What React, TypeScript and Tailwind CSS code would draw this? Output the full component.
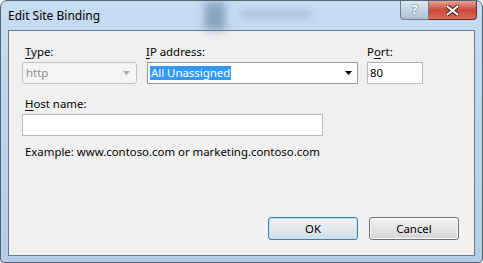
import React from "react";

const FONT = { fontFamily: '"Noto Sans", "Open Sans", Arial, sans-serif' };

function Mn({ children }: { children: React.ReactNode }) {
  return <span className="underline underline-offset-2 decoration-1">{children}</span>;
}

function Arrow({ color }: { color: string }) {
  return (
    <svg width="7" height="4" viewBox="0 0 7 4">
      <path d="M0 0h7L3.5 4z" fill={color} />
    </svg>
  );
}

export default function App() {
  return (
    <div className="w-[483px] h-[263px] bg-white text-[11.4px] text-black" style={FONT}>
      <div className="w-[483px] h-[263px] flex flex-col rounded-t-[7px] rounded-b-[4px] border border-[#55636f] bg-gradient-to-b from-[#c6dcf2] via-[#bcd4ec] to-[#b4cde6] overflow-hidden">
        {/* title bar */}
        <div className="relative h-[29px] shrink-0 flex items-center pl-[7px]">
          <div className="absolute left-[204px] top-[1px] w-[20px] h-[28px] bg-[#5f7d9e] opacity-60 blur-[4px]" />
          <div className="absolute left-[240px] top-[10px] w-[70px] h-[6px] bg-[#8fa9c6] opacity-60 blur-[3px]" />
          <span className="relative text-[12px] leading-none text-black">Edit Site Binding</span>
          <div className="absolute right-[5px] top-0 flex h-[19px]">
            <div className="w-[29px] h-[19px] flex items-center justify-center rounded-bl-[4px] border border-t-0 border-[#6d7d8e] bg-gradient-to-b from-[#dfe8f1] via-[#c4d3e2] to-[#aebfd1] text-[12px] font-bold text-white [text-shadow:0_0_2px_#34404c]">
              ?
            </div>
            <div className="w-[48px] h-[19px] flex items-center justify-center rounded-br-[4px] border border-l-0 border-t-0 border-[#6b2a22] bg-gradient-to-b from-[#e8a293] via-[#c8473a] to-[#d86a55]">
              <svg width="13" height="11" viewBox="0 0 13 11">
                <path d="M1 1l11 9M12 1L1 10" stroke="#4a1a14" strokeWidth="4" strokeLinecap="round" />
                <path d="M1.5 1.5l10 8M11.5 1.5l-10 8" stroke="#ffffff" strokeWidth="2.2" strokeLinecap="round" />
              </svg>
            </div>
          </div>
        </div>

        {/* client area */}
        <div className="flex-1 mx-[7px] mb-[6px] border border-[#6a7886] bg-[#f0f0f0] flex flex-col pl-[13px] pt-[13px]">
          <div className="flex">
            <div className="flex flex-col w-[115px]">
              <span className="h-[15px] leading-[15px] pl-[3px]"><Mn>T</Mn>ype:</span>
              <div className="mt-[3px] h-[22px] flex items-center justify-between rounded-[3px] border border-[#c4c4c4] bg-[#f4f4f4] pl-[3px] pr-[6px] text-[#8c8c8c]">
                <span>http</span>
                <Arrow color="#a8a8a8" />
              </div>
            </div>
            <div className="flex flex-col w-[211px] ml-[10px]">
              <span className="h-[15px] leading-[15px] -ml-[1px]"><Mn>I</Mn>P address:</span>
              <div className="mt-[3px] h-[22px] flex items-center justify-between border border-[#8f9eab] bg-white pl-[2px] pr-[5px]">
                <span className="bg-[#3399ff] text-white leading-[14px] px-[1px]">All Unassigned</span>
                <Arrow color="#000000" />
              </div>
            </div>
            <div className="flex flex-col w-[56px] ml-[9px]">
              <span className="h-[15px] leading-[15px]">P<Mn>o</Mn>rt:</span>
              <div className="mt-[3px] h-[22px] flex items-center border border-[#b5bcc4] border-t-[#abadb3] bg-white pl-[2px]">
                80
              </div>
            </div>
          </div>

          <span className="mt-[12px] h-[15px] leading-[15px] pl-[3px]"><Mn>H</Mn>ost name:</span>
          <div className="mt-[3px] w-[301px] h-[22px] border border-[#b5bcc4] bg-white" />

          <span className="mt-[8px] h-[15px] leading-[15px] pl-[3px]">
            Example: www.contoso.com or marketing.contoso.com
          </span>

          <div className="flex-1" />
          <div className="flex justify-end gap-[11px] pr-[15px] mb-[15px]">
            <button className="w-[90px] h-[23px] rounded-[3px] border border-[#3c7fb1] bg-gradient-to-b from-[#f2f2f2] via-[#e4e9ee] to-[#d0dbe4] shadow-[inset_0_0_0_1px_#bfe3f7] text-[11.4px]">
              OK
            </button>
            <button className="w-[90px] h-[23px] rounded-[3px] border border-[#707070] bg-gradient-to-b from-[#f2f2f2] via-[#e6e6e6] to-[#d3d3d3] shadow-[inset_0_0_0_1px_#fbfbfb] text-[11.4px]">
              Cancel
            </button>
          </div>
        </div>
      </div>
    </div>
  );
}
